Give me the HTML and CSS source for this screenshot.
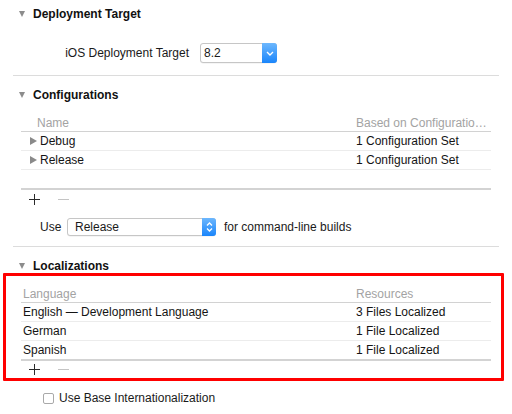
FILE: index.html
```html
<!DOCTYPE html>
<html>
<head>
<meta charset="utf-8">
<link rel="stylesheet" href="styles.css">
</head>
<body>
<div class="page">
  <div class="sec-head"><span class="tri-down"></span><span>Deployment Target</span></div>
  <div class="target-row">
    <span class="target-label">iOS Deployment Target</span>
    <div class="popup popup-target">
      <span class="popup-text">8.2</span>
      <span class="popup-arrow">
        <svg width="8" height="5" viewBox="0 0 8 5"><path d="M1 1 L4 4 L7 1" fill="none" stroke="#fff" stroke-width="1.4"/></svg>
      </span>
    </div>
  </div>
  <div class="sep"></div>

  <div class="sec-head"><span class="tri-down"></span><span>Configurations</span></div>
  <div class="table config">
    <div class="trow thead"><span class="c1 pad-name">Name</span><span class="c2">Based on Configuratio…</span></div>
    <div class="trow"><span class="c1"><span class="tri-right"></span>Debug</span><span class="c2">1 Configuration Set</span></div>
    <div class="trow"><span class="c1"><span class="tri-right"></span>Release</span><span class="c2">1 Configuration Set</span></div>
    <div class="trow empty last"></div>
    <div class="tools">
      <svg class="plus" width="11" height="11" viewBox="0 0 11 11"><path d="M5.5 0 V11 M0 5.5 H11" stroke="#2a2a2a" stroke-width="1"/></svg>
      <svg class="minus" width="11" height="11" viewBox="0 0 11 11"><path d="M0 5.5 H11" stroke="#c4c4c4" stroke-width="1"/></svg>
    </div>
  </div>
  <div class="use-row">
    <span class="use-label">Use</span>
    <div class="popup popup-use">
      <span class="popup-text">Release</span>
      <span class="popup-arrow small">
        <svg width="7" height="10" viewBox="0 0 7 10"><path d="M1 3.5 L3.5 1 L6 3.5 M1 6.5 L3.5 9 L6 6.5" fill="none" stroke="#fff" stroke-width="1.3"/></svg>
      </span>
    </div>
    <span class="use-after">for command-line builds</span>
  </div>
  <div class="sep"></div>

  <div class="sec-head short"><span class="tri-down"></span><span>Localizations</span></div>
  <div class="highlight">
    <div class="table loc">
      <div class="trow thead"><span class="c1">Language</span><span class="c2">Resources</span></div>
      <div class="trow"><span class="c1">English — Development Language</span><span class="c2">3 Files Localized</span></div>
      <div class="trow"><span class="c1">German</span><span class="c2">1 File Localized</span></div>
      <div class="trow last"><span class="c1">Spanish</span><span class="c2">1 File Localized</span></div>
      <div class="tools short">
        <svg class="plus" width="11" height="11" viewBox="0 0 11 11"><path d="M5.5 0 V11 M0 5.5 H11" stroke="#2a2a2a" stroke-width="1"/></svg>
        <svg class="minus" width="11" height="11" viewBox="0 0 11 11"><path d="M0 5.5 H11" stroke="#c4c4c4" stroke-width="1"/></svg>
      </div>
    </div>
  </div>
  <div class="check-row">
    <span class="checkbox"></span>
    <span>Use Base Internationalization</span>
  </div>
</div>
</body>
</html>
```

FILE: styles.css
```css
html, body {
  margin: 0;
  padding: 0;
  background: #ffffff;
}
body {
  width: 512px;
  height: 414px;
  overflow: hidden;
  font-family: "Liberation Sans", Arial, sans-serif;
  font-size: 12px;
  color: #1a1a1a;
}
.page {
  padding: 6px 13px 0 13px;
}
.sec-head {
  display: flex;
  align-items: center;
  height: 16px;
  padding-left: 6px;
  gap: 8px;
  font-weight: bold;
  color: #111;
}
.sec-head.short {
  height: 15px;
}
.sep + .sec-head {
  margin-top: 11px;
}
.tri-down {
  width: 0;
  height: 0;
  border-left: 3.5px solid transparent;
  border-right: 3.5px solid transparent;
  border-top: 6px solid #8c8c8c;
}
.target-row {
  display: flex;
  align-items: center;
  gap: 11px;
  margin-top: 21px;
  height: 20px;
}
.target-label {
  width: 176px;
  text-align: right;
}
.popup {
  display: flex;
  align-items: stretch;
  box-sizing: border-box;
  background: #fff;
  border: 1px solid #c6c6c6;
  border-radius: 3px;
  box-shadow: 0 0.5px 0.5px rgba(0,0,0,0.08);
}
.popup-target {
  width: 77px;
  height: 20px;
}
.popup-use {
  width: 149px;
  height: 18px;
}
.popup-text {
  flex: 1;
  display: flex;
  align-items: center;
  padding-left: 3px;
}
.popup-use .popup-text {
  padding-left: 7px;
}
.popup-arrow {
  width: 15px;
  margin: -1px -1px -1px 0;
  border-radius: 0 3px 3px 0;
  background: linear-gradient(#6db7fd, #1a85fb);
  display: flex;
  align-items: center;
  justify-content: center;
}
.popup-arrow.small {
  width: 14px;
}
.sep {
  margin-top: 12px;
  height: 1px;
  background: #dcdcdc;
}
.use-row + .sep {
  margin-top: 10px;
}
.table {
  margin-left: 8px;
  width: 470px;
}
.table.config {
  margin-top: 11px;
}
.trow {
  display: grid;
  grid-template-columns: 335px 1fr;
  align-items: center;
  height: 18px;
  border-bottom: 1px solid #ececec;
  color: #141414;
}
.trow.thead {
  height: 17px;
  border-bottom-color: #d2d2d2;
  color: #a3a3a3;
}
.trow.last {
  border-bottom: 2px solid #d3d3d3;
}
.c1 {
  display: flex;
  align-items: center;
  white-space: nowrap;
}
.config .c1 {
  padding-left: 9px;
}
.config .pad-name {
  padding-left: 16px;
}
.config .c2 {
  padding-left: 0;
}
.loc .c1 {
  padding-left: 2px;
}
.tri-right {
  width: 0;
  height: 0;
  border-top: 4.5px solid transparent;
  border-bottom: 4.5px solid transparent;
  border-left: 7px solid #8a8a8a;
  margin-right: 3px;
}
.tools {
  display: flex;
  align-items: center;
  height: 18px;
  padding-left: 8px;
  gap: 18px;
}
.tools.short {
  height: 17px;
}
.use-row {
  display: flex;
  align-items: center;
  margin-top: 10px;
  height: 18px;
  padding-left: 27px;
}
.use-label {
  width: 27px;
}
.use-after {
  margin-left: 8px;
}
.highlight {
  margin-left: -10px;
  margin-right: -5px;
  border: 3px solid #ff0000;
  border-radius: 1px;
  padding-top: 9px;
  padding-left: 15px;
}
.loc {
  margin-left: 0;
}
.check-row {
  display: flex;
  align-items: center;
  gap: 5px;
  margin-top: 11px;
  height: 12px;
  padding-left: 30px;
}
.checkbox {
  width: 11px;
  height: 11px;
  box-sizing: border-box;
  border: 1px solid #a9a9a9;
  border-radius: 2px;
  background: #fff;
}
```
